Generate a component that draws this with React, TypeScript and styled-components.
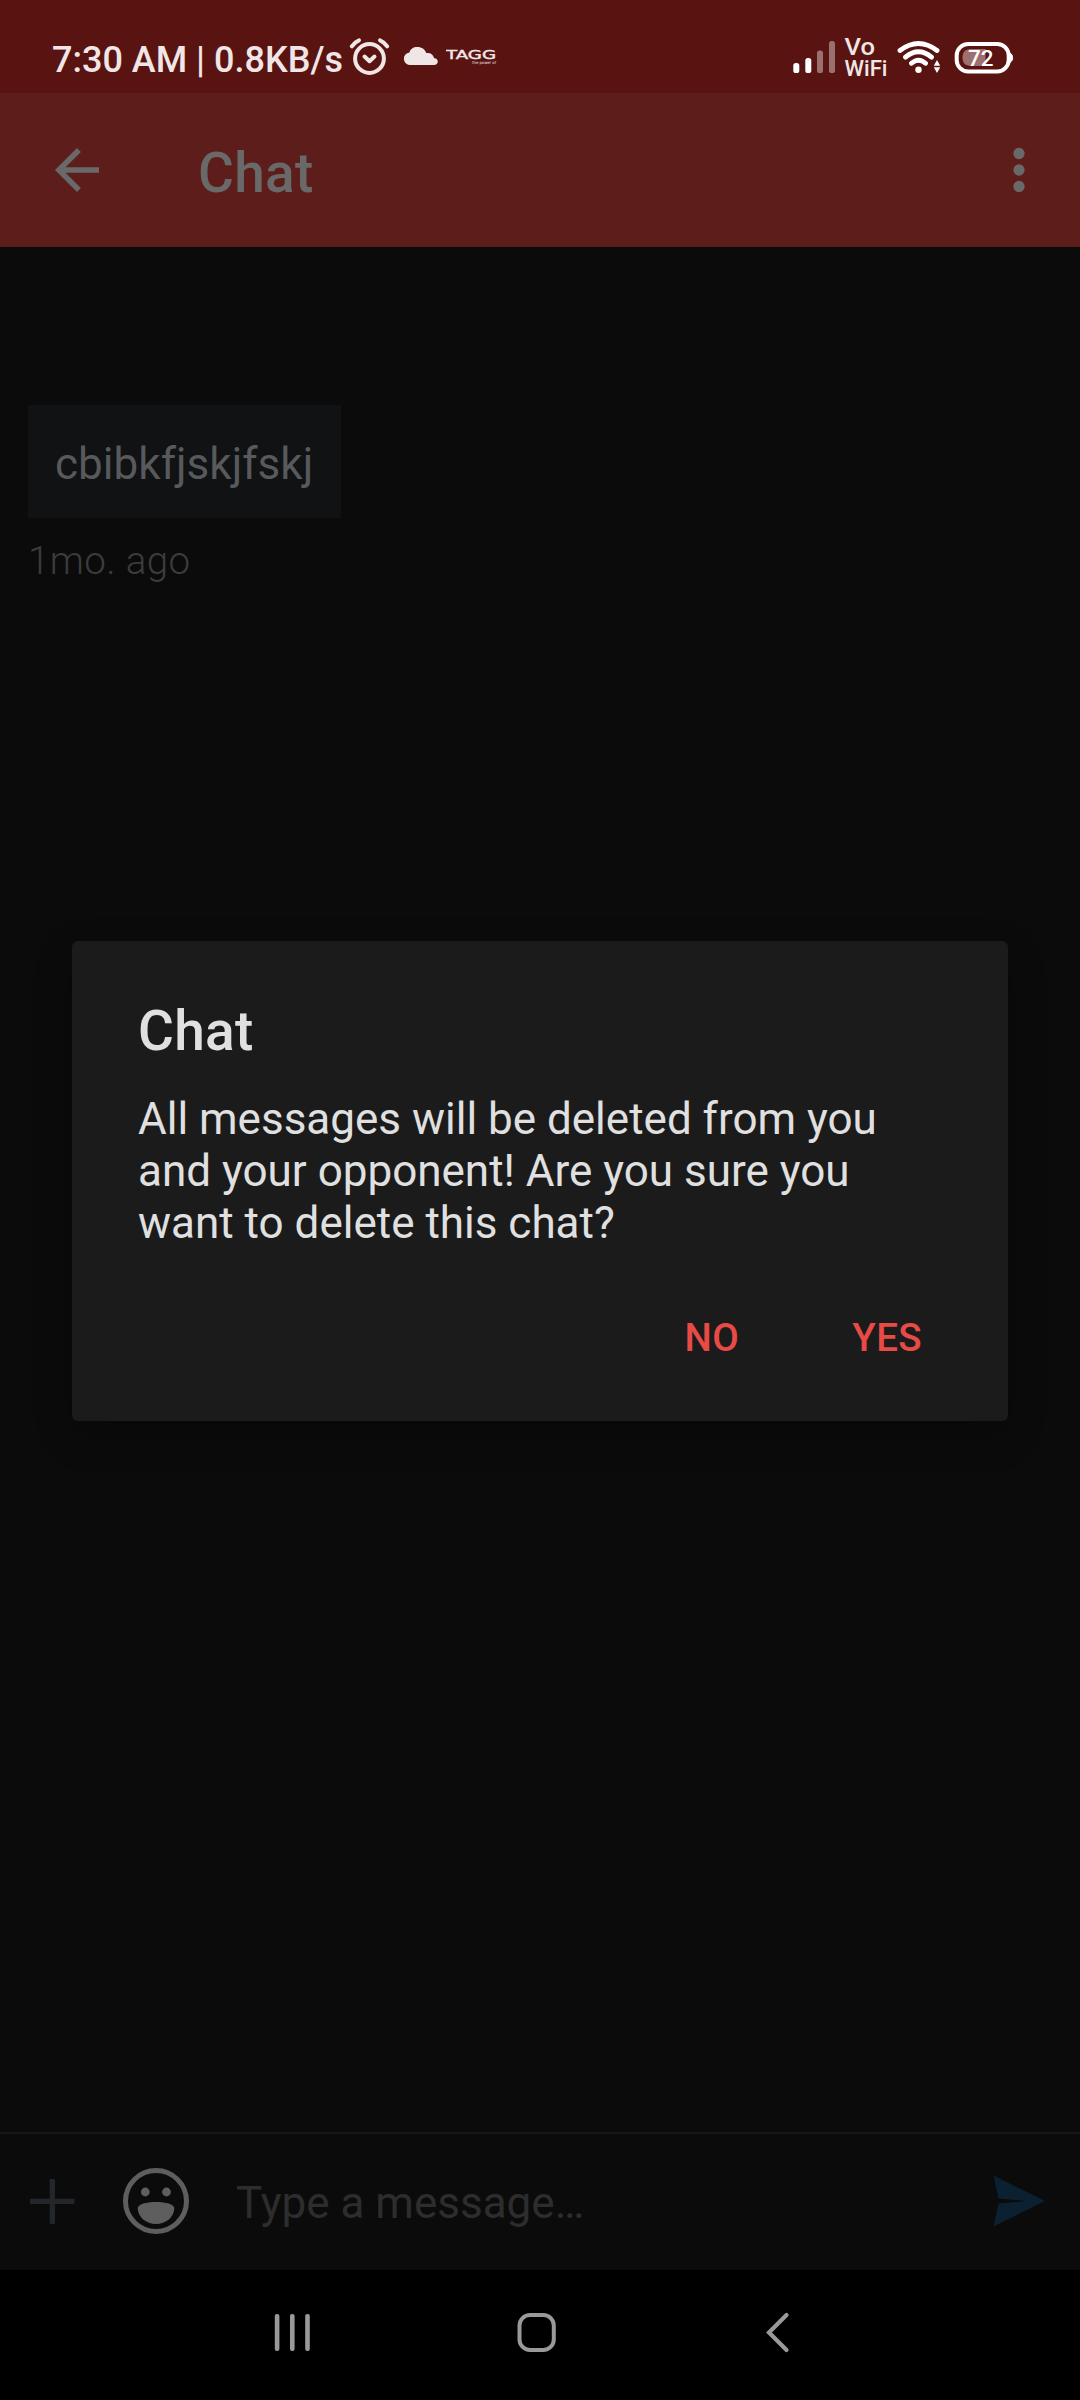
import React from "react";
import styled, { createGlobalStyle } from "styled-components";

const Global = createGlobalStyle`
  *, *::before, *::after { box-sizing: border-box; }
  body { margin: 0; background: #000; }
`;

const Screen = styled.div`
  position: relative;
  display: flex;
  flex-direction: column;
  width: 1080px;
  height: 2400px;
  overflow: hidden;
  background: #0b0b0b;
  font-family: Roboto, "Noto Sans", sans-serif;
`;

const StatusBar = styled.header`
  display: flex;
  justify-content: space-between;
  height: 93px;
  padding: 0 66px 0 52px;
  background: #591311;
`;

const StatusGroup = styled.div`
  display: flex;
`;

const Clock = styled.span`
  width: 297px;
  margin-top: 39px;
  font-size: 36px;
  font-weight: 500;
  line-height: 42px;
  white-space: nowrap;
  color: #f0e6e6;
`;

const Glyph = styled.svg`
  display: block;
  flex: none;
`;

const AppBar = styled.nav`
  display: flex;
  align-items: center;
  height: 154px;
  padding: 0 28px 0 44px;
  background: #5c1d1b;
  color: #696969;
`;

const BarTitle = styled.h1`
  flex: 1;
  margin: 6px 0 0 88px;
  font-size: 55px;
  font-weight: 500;
  line-height: 64px;
  letter-spacing: 0.3px;
`;

const Messages = styled.main`
  flex: 1;
  display: flex;
  flex-direction: column;
  align-items: flex-start;
  padding: 158px 28px 0;
`;

const Bubble = styled.div`
  padding: 33px 28px 28px 27px;
  background: #111214;
  color: #57595b;
  font-size: 44px;
  line-height: 52px;
  letter-spacing: 0.04px;
`;

const Stamp = styled.time`
  margin-top: 20px;
  font-size: 38.5px;
  font-weight: 300;
  line-height: 46px;
  letter-spacing: 0.4px;
  color: #3c3c3c;
`;

const Composer = styled.footer`
  display: flex;
  height: 138px;
  padding: 0 32px 0 28px;
  border-top: 2px solid #171717;
`;

const Placeholder = styled.span`
  flex: 1;
  margin: 43px 0 0 46px;
  font-size: 44px;
  line-height: 52px;
  color: #2d2d2d;
`;

const NavBar = styled.div`
  display: flex;
  justify-content: space-between;
  height: 130px;
  padding: 0 288px 0 270px;
  background: #000;
`;

const Overlay = styled.div`
  position: absolute;
  inset: 92px 0 130px;
  display: flex;
  align-items: center;
  justify-content: center;
`;

const Dialog = styled.section`
  width: 936px;
  height: 480px;
  padding: 58px 66px 0;
  border-radius: 6px;
  background: #1b1b1b;
  box-shadow: 0 14px 36px rgba(0, 0, 0, 0.25);
  color: #e0e0e0;
`;

const DialogTitle = styled.h2`
  margin: 0;
  font-size: 55px;
  font-weight: 500;
  line-height: 64px;
  letter-spacing: 0.3px;
`;

const DialogText = styled.p`
  margin: 30px 0 63px;
  font-size: 44px;
  line-height: 52px;
`;

const Actions = styled.div`
  display: flex;
  justify-content: flex-end;
  gap: 113px;
  padding-right: 20px;
`;

const Action = styled.button`
  padding: 0;
  border: 0;
  background: none;
  font: 500 38.5px/52px Roboto, sans-serif;
  letter-spacing: 0.4px;
  color: #e84a46;
`;

const light = "#f0e6e6";

const StatusIcons = () => (
  <>
    <StatusGroup>
      <Clock>7:30 AM | 0.8KB/s</Clock>
      <Glyph width="42" height="93" viewBox="349 0 42 93" fill="none" stroke={light} strokeWidth="4" strokeLinecap="round" strokeLinejoin="round">
        <circle cx="369.5" cy="58.5" r="14.4" />
        <path d="M364.5 56.5l5 4.7 5-4.7" />
        <path d="M351.8 46.3q2.8-4.2 7.2-6M387.2 46.3q-2.8-4.2-7.2-6" />
      </Glyph>
      <Glyph width="55" height="93" viewBox="391 0 55 93" fill={light}>
        <path d="M411 65a6.3 6.3 0 0 1-1.6-12.6C410.5 49 413 47 417.5 47c4.2 0 7.5 2.2 8.8 6 4.4-.6 7 1.5 7.7 5 2.2.3 3.8 1.5 3.8 3.5 0 2.2-1.6 3.5-3.8 3.5z" />
      </Glyph>
      <Glyph width="54" height="93" viewBox="446 0 54 93" fill={light}>
        <text x="446" y="59" fontFamily="DejaVu Sans" fontSize="12" stroke={light} strokeWidth=".4" textLength="50" lengthAdjust="spacingAndGlyphs">TAGG</text>
        <text x="472" y="64" fontFamily="DejaVu Sans" fontSize="4" textLength="24" lengthAdjust="spacingAndGlyphs">the power of</text>
      </Glyph>
    </StatusGroup>
    <StatusGroup>
      <Glyph width="51" height="93" viewBox="793 0 51 93" fill="#fff">
        <rect x="793.3" y="63" width="6" height="10" rx="2.6" />
        <rect x="805.3" y="58" width="6" height="15" rx="2.6" />
        <rect x="817" y="50.5" width="6" height="22.5" rx="2.6" opacity=".4" />
        <rect x="829" y="41" width="6" height="32" rx="2.6" opacity=".4" />
      </Glyph>
      <Glyph width="53" height="93" viewBox="844 0 53 93" fill={light} fontFamily="Roboto" fontWeight="500">
        <text x="844.5" y="54.5" fontSize="23" textLength="30.5" lengthAdjust="spacingAndGlyphs">Vo</text>
        <text x="844.5" y="75.7" fontSize="21.5" textLength="43" lengthAdjust="spacingAndGlyphs">WiFi</text>
      </Glyph>
      <Glyph width="57" height="93" viewBox="897 0 57 93" fill="none" stroke="#fff" strokeWidth="4.8" strokeLinecap="round">
        <path d="M900 50.5Q918.5 36.5 937 50.5M905.5 57.2Q918.5 46.5 931.5 57.2M911.5 63.3Q918.5 57 925.5 63.3" />
        <circle cx="918.5" cy="69.8" r="3.2" fill="#fff" stroke="none" />
        <path d="M933.8 65.7l3.2-5.7 3.2 5.7zM933.8 67.3l3.2 5.7 3.2-5.7z" fill="#fff" stroke="none" />
      </Glyph>
      <Glyph width="60" height="93" viewBox="954 0 60 93">
        <path d="M972 49h13.5v17H972c-6 0-9.5-2-9.5-8.5s3.5-8.5 9.5-8.5z" fill="#9f6f6e" />
        <rect x="956.7" y="44" width="52" height="27.5" rx="11.5" fill="none" stroke="#fff" strokeWidth="4" />
        <path d="M1010 53c3.5 2 3.5 7.5 0 9.5z" fill="#fff" stroke="#fff" />
        <text x="968" y="65.7" fontSize="22" fontWeight="500" fontFamily="Roboto" fill="#fff" textLength="25.5" lengthAdjust="spacingAndGlyphs">72</text>
      </Glyph>
    </StatusGroup>
  </>
);

export default function App() {
  return (
    <Screen>
      <Global />
      <StatusBar>
        <StatusIcons />
      </StatusBar>
      <AppBar>
        <Glyph width="66" height="66" viewBox="0 0 24 24" fill="currentColor">
          <path d="M20 11H7.83l5.59-5.59L12 4l-8 8 8 8 1.41-1.41L7.83 13H20z" />
        </Glyph>
        <BarTitle>Chat</BarTitle>
        <Glyph width="66" height="66" viewBox="0 0 24 24" fill="currentColor">
          <circle cx="12" cy="6" r="2.05" />
          <circle cx="12" cy="12" r="2.05" />
          <circle cx="12" cy="18" r="2.05" />
        </Glyph>
      </AppBar>
      <Messages>
        <Bubble>cbibkfjskjfskj</Bubble>
        <Stamp>1mo. ago</Stamp>
      </Messages>
      <Composer>
        <Glyph width="90" height="136" viewBox="28 2134 90 136" fill="#23272b">
          <rect x="30" y="2198.7" width="44.5" height="5.3" rx="1.2" />
          <rect x="49.7" y="2179" width="5.3" height="45" rx="1.2" />
        </Glyph>
        <Glyph width="72" height="136" viewBox="118 2134 72 136" fill="#5e5e5e">
          <circle cx="156" cy="2201" r="30.5" fill="none" stroke="#5e5e5e" strokeWidth="5" />
          <circle cx="145.3" cy="2192" r="4.4" />
          <circle cx="166.5" cy="2192" r="4.4" />
          <path d="M137.7 2208c.6-3.8 8-6 18.3-6s17.7 2.2 18.3 6c0 9-8.3 16-18.3 16s-18.3-7-18.3-16z" />
        </Glyph>
        <Placeholder>Type a message…</Placeholder>
        <Glyph width="56" height="136" viewBox="992 2134 56 136" fill="#0b2132">
          <path d="M993.5 2175.5L1045 2201l-51.5 25.5 5-23 27-2.5-27-2.5z" />
        </Glyph>
      </Composer>
      <NavBar>
        <Glyph width="44" height="130" viewBox="270 2270 44 130" fill="#999">
          <rect x="274.8" y="2314" width="4.6" height="37" rx="2" />
          <rect x="290" y="2314" width="4.6" height="37" rx="2" />
          <rect x="305.2" y="2314" width="4.6" height="37" rx="2" />
        </Glyph>
        <Glyph width="44" height="130" viewBox="516 2270 44 130" fill="none" stroke="#999" strokeWidth="4">
          <rect x="519.5" y="2315" width="34.3" height="35" rx="10.5" />
        </Glyph>
        <Glyph width="30" height="130" viewBox="762 2270 30 130" fill="none" stroke="#999" strokeWidth="4.2" strokeLinecap="round">
          <path d="M786.5 2315L769 2332.5l17.5 17.5" />
        </Glyph>
      </NavBar>
      <Overlay>
        <Dialog role="dialog">
          <DialogTitle>Chat</DialogTitle>
          <DialogText>
            All messages will be deleted from you and your opponent! Are you sure you want to delete this chat?
          </DialogText>
          <Actions>
            <Action>NO</Action>
            <Action>YES</Action>
          </Actions>
        </Dialog>
      </Overlay>
    </Screen>
  );
}
